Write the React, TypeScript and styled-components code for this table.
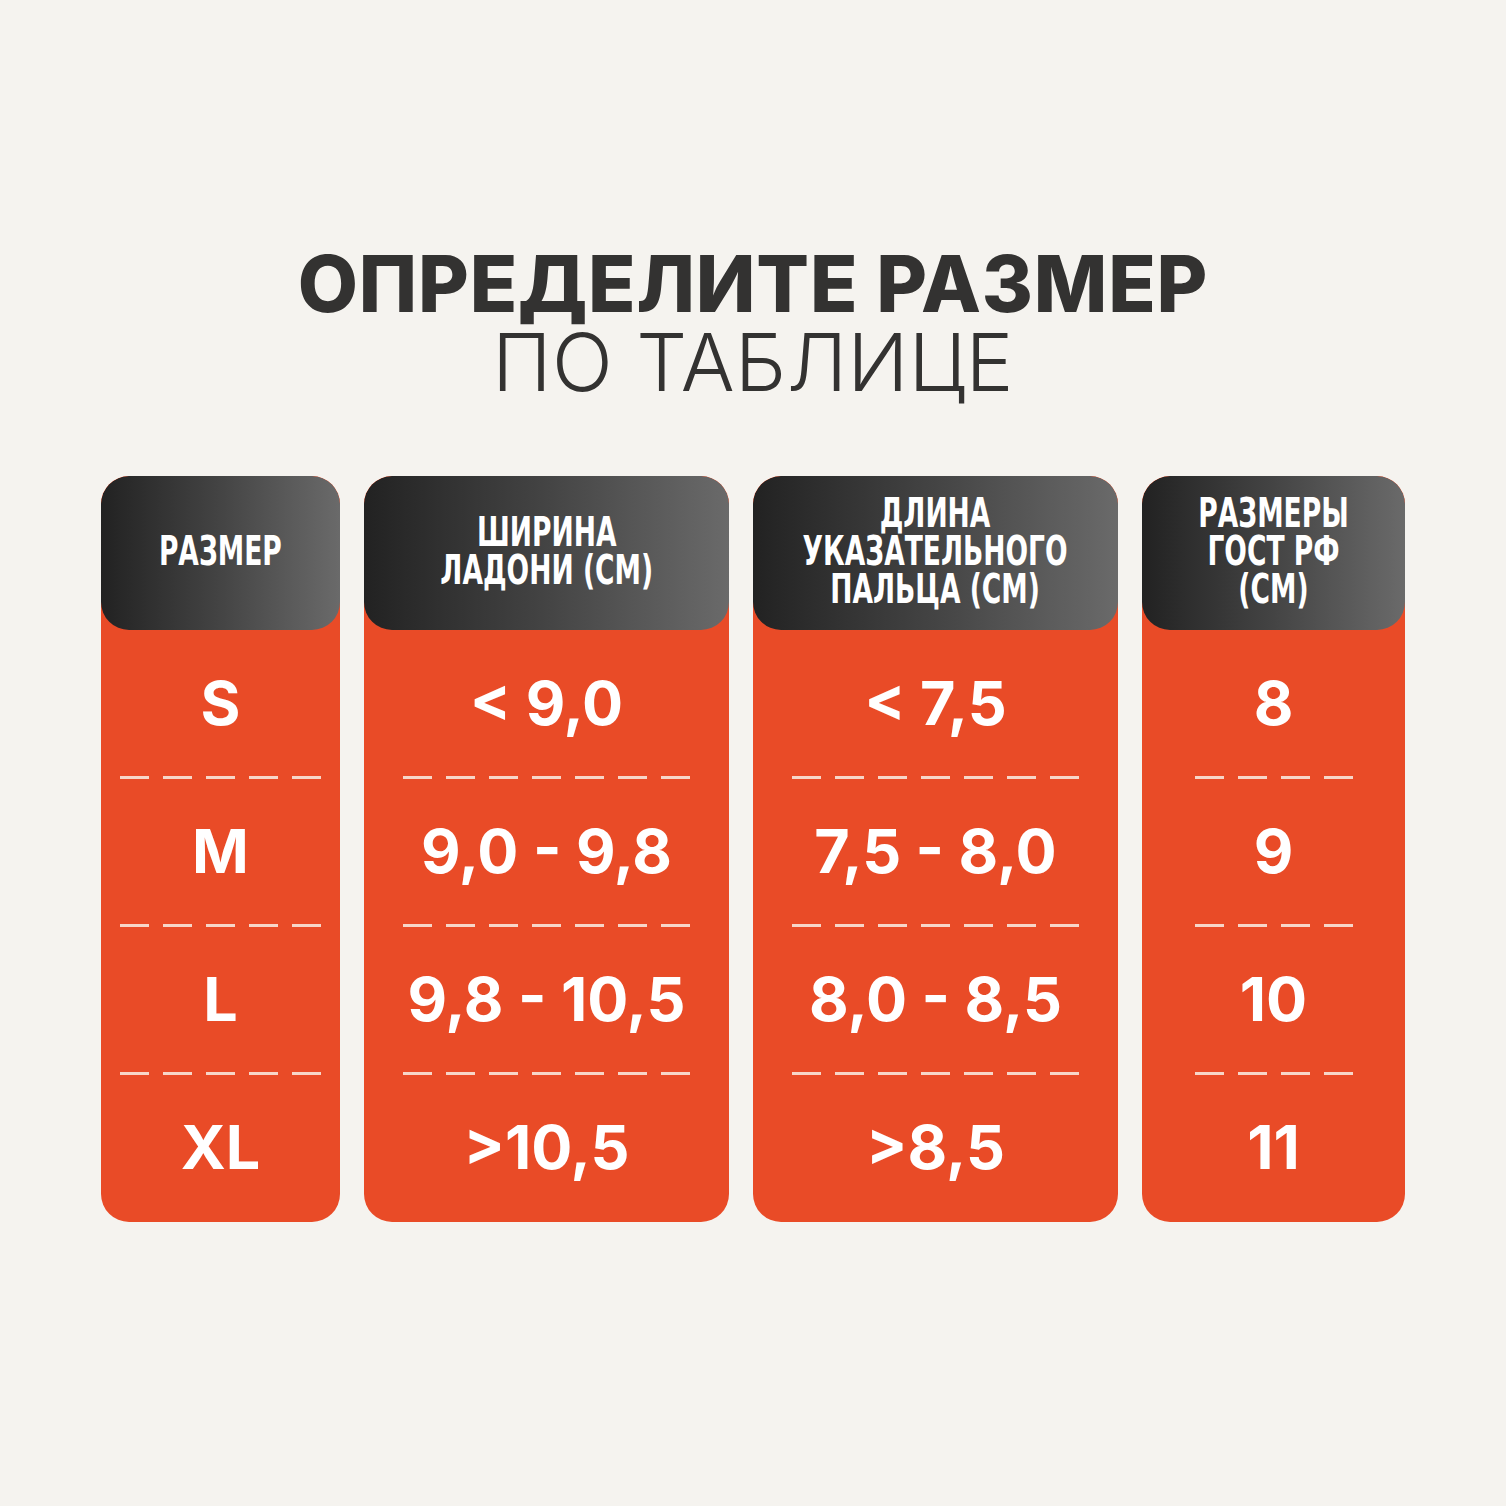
import React from "react";
import styled, { createGlobalStyle } from "styled-components";

const Global = createGlobalStyle`
  html, body { margin: 0; padding: 0; background: #f5f3ef; }
  body { font-family: "Inter", "Open Sans", sans-serif; }
`;

const Page = styled.div`
  width: 1506px;
  height: 1506px;
  background: #f5f3ef;
  display: flex;
  flex-direction: column;
  align-items: center;
  box-sizing: border-box;
  padding-top: 245px;
`;

const Title = styled.h1`
  margin: 0;
  text-align: center;
  color: #333231;
  font-family: "Inter", "Open Sans", sans-serif;
  line-height: 78px;
`;

const TitleBold = styled.span`
  display: block;
  font-weight: 800;
  font-size: 78px;
  letter-spacing: 0.8px;
`;

const TitleLight = styled.span`
  display: block;
  font-weight: 300;
  font-size: 80px;
  letter-spacing: 0.5px;
`;

const Table = styled.div`
  margin-top: 75px;
  display: grid;
  grid-template-columns: 239px 365px 365px 263px;
  column-gap: 24px;
`;

const Column = styled.div`
  background: #e94b27;
  border-radius: 28px;
  overflow: hidden;
  display: flex;
  flex-direction: column;
  height: 746px;
`;

const Header = styled.div`
  height: 154px;
  border-radius: 28px;
  background: linear-gradient(90deg, #222222 0%, #444444 50%, #6a6a6a 100%);
  display: flex;
  align-items: center;
  justify-content: center;
  text-align: center;
  color: #ffffff;
  font-family: "Liberation Sans Narrow", "DejaVu Sans Condensed", "Roboto", sans-serif;
  font-weight: 700;
  font-size: 41px;
  line-height: 38px;
  padding-bottom: 4px;
  box-sizing: border-box;
`;

const HeaderText = styled.span`
  display: inline-block;
  transform: scaleX(0.72);
  white-space: pre-line;
`;

const Cell = styled.div`
  height: 146px;
  display: flex;
  align-items: center;
  justify-content: center;
  color: #ffffff;
  font-family: "Inter", "Open Sans", sans-serif;
  font-weight: 700;
  font-size: 61px;
`;

const Dashes = styled.div`
  height: 2px;
  display: flex;
  justify-content: center;
  align-items: center;
  gap: 14px;
`;

const Dash = styled.span`
  width: 29px;
  height: 3px;
  background: #f7d6c8;
  flex: none;
`;

type Col = { header: string; values: string[]; dashes: number };

const columns: Col[] = [
  { header: "РАЗМЕР", values: ["S", "M", "L", "XL"], dashes: 5 },
  { header: "ШИРИНА\nЛАДОНИ (СМ)", values: ["< 9,0", "9,0 - 9,8", "9,8 - 10,5", ">10,5"], dashes: 7 },
  { header: "ДЛИНА\nУКАЗАТЕЛЬНОГО\nПАЛЬЦА (СМ)", values: ["< 7,5", "7,5 - 8,0", "8,0 - 8,5", ">8,5"], dashes: 7 },
  { header: "РАЗМЕРЫ\nГОСТ РФ\n(СМ)", values: ["8", "9", "10", "11"], dashes: 4 },
];

export default function App() {
  return (
    <>
      <Global />
      <Page>
        <Title>
          <TitleBold>ОПРЕДЕЛИТЕ РАЗМЕР</TitleBold>
          <TitleLight>ПО ТАБЛИЦЕ</TitleLight>
        </Title>
        <Table>
          {columns.map((c, ci) => (
            <Column key={ci}>
              <Header>
                <HeaderText>{c.header}</HeaderText>
              </Header>
              {c.values.map((v, vi) => (
                <React.Fragment key={vi}>
                  <Cell>{v}</Cell>
                  {vi < c.values.length - 1 && (
                    <Dashes>
                      {Array.from({ length: c.dashes }).map((_, di) => (
                        <Dash key={di} />
                      ))}
                    </Dashes>
                  )}
                </React.Fragment>
              ))}
            </Column>
          ))}
        </Table>
      </Page>
    </>
  );
}
